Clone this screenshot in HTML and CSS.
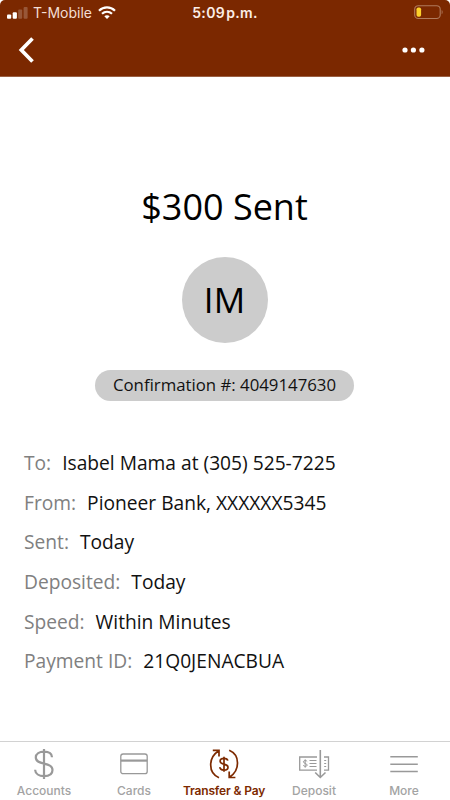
FILE: index.html
```html
<!DOCTYPE html>
<html lang="en">
<head>
<meta charset="utf-8">
<title>Payment sent</title>
<link rel="stylesheet" href="styles.css">
</head>
<body>
<div class="screen">
  <header class="header">
    <div class="status">
      <div class="status-left">
        <svg class="signal" width="21" height="12" viewBox="0 0 21 12"><g fill="#fff"><rect x="0" y="7.5" width="4.200" height="4.2" rx="1"/><rect x="5.7" y="5.2" width="4.200" height="6.500" rx="1"/><g opacity=".22"><rect x="11.2" y="2.600" width="4" height="9.100" rx="1"/><rect x="16.6" y="0" width="4" height="11.7" rx="1"/></g></g></svg>
        <span class="carrier">T-Mobile</span>
        <svg class="wifi" width="18" height="13" viewBox="0 0 18 13" fill="none" stroke="#fff" stroke-width="2.2"><path d="M1 4.7C5.5.2 12.5.2 17 4.7M4 7.8c2.9-2.7 7.1-2.7 10 0"/><path d="M6.3 10.2c1.5-1.4 3.9-1.4 5.4 0L9 12.9z" fill="#fff" stroke="none"/></svg>
      </div>
      <span class="time">5:09 p.m.</span>
      <svg class="battery" width="29" height="15" viewBox="0 0 29 15"><rect x=".7" y=".7" width="25.5" height="12.8" rx="3.6" fill="none" stroke="#b07a5c" stroke-width="1.1"/><rect x="2.5" y="2.4" width="4.6" height="9.4" rx="1.8" fill="#fcd12a"/><path d="M27.7 5c1.2.5 1.2 3.7 0 4.2z" fill="#b07a5c"/></svg>
    </div>
    <nav class="nav">
      <svg width="17" height="26" viewBox="0 0 17 26" fill="none" stroke="#fff" stroke-width="3.700"><path d="M14.500 1.500 3.300 13 14.500 24.500"/></svg>
      <svg width="23" height="6" viewBox="0 0 23 6" fill="#fff"><circle cx="3" cy="3" r="2.6"/><circle cx="11.4" cy="3" r="2.6"/><circle cx="19.9" cy="3" r="2.6"/></svg>
    </nav>
  </header>
  <main class="content">
    <h1 class="title">$300 Sent</h1>
    <div class="avatar">IM</div>
    <div class="confirmation">Confirmation #: 4049147630</div>
    <dl class="details">
      <div class="row"><dt>To:</dt><dd>Isabel Mama at (305) 525-7225</dd></div>
      <div class="row"><dt>From:</dt><dd>Pioneer Bank, XXXXXX5345</dd></div>
      <div class="row"><dt>Sent:</dt><dd>Today</dd></div>
      <div class="row"><dt>Deposited:</dt><dd>Today</dd></div>
      <div class="row"><dt>Speed:</dt><dd>Within Minutes</dd></div>
      <div class="row"><dt>Payment ID:</dt><dd>21Q0JENACBUA</dd></div>
    </dl>
  </main>
  <footer class="tabs">
    <div class="tab">
      <svg width="30" height="32" viewBox="0 0 30 32" fill="none" stroke="#999" stroke-width="2.200"><path d="M15 1v30M23 9.2C22.8 5.5 19.5 3.7 15 3.7S6.800 5.700 6.800 9.500c0 8.300 16.700 4 16.700 12.400 0 4.100-3.500 6.200-8.500 6.200s-8.700-2.400-8.900-6.400"/></svg>
      <span>Accounts</span>
    </div>
    <div class="tab">
      <svg width="30" height="32" viewBox="0 0 30 32" fill="none" stroke="#999" stroke-width="1.3"><rect x="1.800" y="6" width="26.400" height="19.700" rx="2.300"/><path d="M1.800 12.600h26.400" stroke-width="2.200"/></svg>
      <span>Cards</span>
    </div>
    <div class="tab active">
      <svg width="32" height="32" viewBox="0 0 32 32" fill="none" stroke="#7d2a00" stroke-width="1.700"><path d="M11 29.700C-.2 25 .2 9.500 10.500 3M4.800 2.400h6.200v6M21.200 2.300c11.200 4.800 10.800 20 .5 26.700M27.400 29.500h-6.200v-6"/><path d="M16 8.700v15M19.800 12.700c-.3-1.600-1.800-2.300-3.800-2.300-2.400 0-3.900 1-3.900 2.800 0 4 7.900 1.900 7.900 6 0 1.800-1.600 2.900-4 2.900s-4-1-4.200-2.900"/></svg>
      <span>Transfer &amp; Pay</span>
    </div>
    <div class="tab">
      <svg width="32" height="32" viewBox="0 0 32 32" fill="none" stroke="#999" stroke-width="1.300"><path d="M19 9H1.700v13.200H19M26 9h4.500v13.200H26"/><path d="M22.300 2v27M17.200 24.500l5.100 5 5.200-5" stroke-width="1.600"/><path d="M11.500 12.500h7M11.500 15.500h7M11.500 18.500h7M26.200 12.500h2M26.200 15.500h2M26.200 18.500h2M7.200 11.300v8.400M9.200 13.500c-.5-1.300-3.800-1.300-3.800.3 0 1.800 3.800 1.500 3.800 3.300 0 1.700-3.500 1.600-4 .2" stroke-width="1"/></svg>
      <span>Deposit</span>
    </div>
    <div class="tab">
      <svg width="30" height="32" viewBox="0 0 30 32" fill="none" stroke="#999" stroke-width="1.500"><path d="M1.300 8.800h27.500M1.300 16.200h27.500M1.300 23.500h27.500"/></svg>
      <span>More</span>
    </div>
  </footer>
</div>
</body>
</html>
```
FILE: styles.css
```css
* {
  box-sizing: border-box;
}

body {
  margin: 0;
  background: #fff;
}

svg {
  display: block;
}

.screen {
  width: 450px;
  height: 800px;
  display: flex;
  flex-direction: column;
  overflow: hidden;
  background: #fff;
  font-family: "Open Sans", sans-serif;
}

.header {
  height: 77px;
  flex: none;
  background: #7b2800;
  border-bottom: 1px solid #9b6043;
  border-radius: 5px 5px 0 0;
  color: #fff;
}

.status {
  height: 25px;
  display: grid;
  grid-template-columns: 1fr auto 1fr;
  align-items: center;
  padding: 0 7px;
  font-family: Inter, sans-serif;
  font-size: 14px;
}

.status-left {
  display: flex;
  align-items: center;
}

.carrier {
  margin: 0 6px 0 5px;
  color: #f3dfd5;
}

.time {
  font-weight: 600;
  color: #fbeee7;
  font-size: 14px;
  letter-spacing: 0.3px;
  word-spacing: -2.5px;
}

.battery {
  justify-self: end;
}

.nav {
  height: 50px;
  display: flex;
  align-items: center;
  justify-content: space-between;
  padding: 0 25px 0 18px;
}

.content {
  flex: 1;
  display: flex;
  flex-direction: column;
  align-items: center;
  padding: 105px 1px 0 0;
  color: #111;
}

.title {
  margin: 0;
  font-size: 36px;
  line-height: 50px;
  font-weight: 400;
  color: #000;
}

.avatar {
  width: 86px;
  height: 86px;
  margin-top: 25px;
  border-radius: 50%;
  background: #ccc;
  color: #000;
  font-size: 35px;
  line-height: 86px;
  text-align: center;
}

.confirmation {
  width: 259px;
  height: 31px;
  margin-top: 27px;
  border-radius: 16px;
  background: #ccc;
  font-size: 16.8px;
  line-height: 30px;
  text-align: center;
  white-space: nowrap;
}

.details {
  align-self: stretch;
  margin: 42px 0 0;
  padding-left: 24px;
  font-size: 19.2px;
}

.row {
  display: flex;
  align-items: center;
  gap: 11px;
  height: 39.6px;
}

.row dt {
  color: #808080;
}

.row dd {
  margin: 0;
}

.tabs {
  height: 59px;
  flex: none;
  display: grid;
  grid-template-columns: repeat(5, 90px);
  margin-left: -1px;
  border-top: 1px solid #d2d2d2;
  width: 451px;
  font-family: Inter, sans-serif;
  font-size: 12px;
  font-weight: 500;
  color: #a3a3a3;
}

.tab {
  display: flex;
  flex-direction: column;
  align-items: center;
  padding-top: 6px;
  line-height: 15px;
  white-space: nowrap;
}

.tab span {
  margin-top: 3px;
}

.active {
  color: #7d2a00;
  font-weight: 600;
  letter-spacing: -0.15px;
}
```
